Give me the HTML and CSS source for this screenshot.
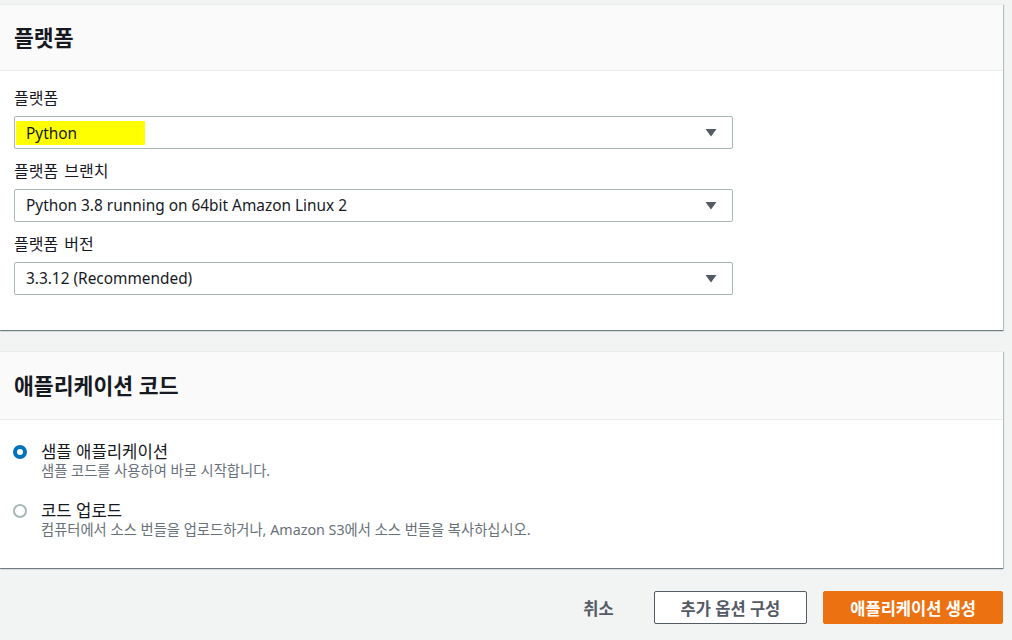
FILE: index.html
```html
<!DOCTYPE html>
<html lang="ko">
<head>
<meta charset="utf-8">
<link rel="stylesheet" href="styles.css">
</head>
<body>
<div class="page">
  <section class="card card-platform">
    <header class="card-header"><h2>플랫폼</h2></header>
    <div class="card-body">
      <div class="field">
        <div class="field-label">플랫폼</div>
        <div class="select">
          <span class="select-value"><span class="marker">Python</span></span>
          <svg class="caret" width="12" height="9" viewBox="0 0 12 9"><path d="M0.5 1h11L6 8.5z" fill="#545b64"/></svg>
        </div>
      </div>
      <div class="field">
        <div class="field-label">플랫폼 브랜치</div>
        <div class="select">
          <span class="select-value">Python 3.8 running on 64bit Amazon Linux 2</span>
          <svg class="caret" width="12" height="9" viewBox="0 0 12 9"><path d="M0.5 1h11L6 8.5z" fill="#545b64"/></svg>
        </div>
      </div>
      <div class="field">
        <div class="field-label">플랫폼 버전</div>
        <div class="select">
          <span class="select-value">3.3.12 (Recommended)</span>
          <svg class="caret" width="12" height="9" viewBox="0 0 12 9"><path d="M0.5 1h11L6 8.5z" fill="#545b64"/></svg>
        </div>
      </div>
    </div>
  </section>

  <section class="card card-code">
    <header class="card-header"><h2>애플리케이션 코드</h2></header>
    <div class="card-body radios">
      <div class="radio-item">
        <span class="radio checked"></span>
        <div class="radio-text">
          <div class="radio-label">샘플 애플리케이션</div>
          <div class="radio-desc">샘플 코드를 사용하여 바로 시작합니다.</div>
        </div>
      </div>
      <div class="radio-item">
        <span class="radio"></span>
        <div class="radio-text">
          <div class="radio-label">코드 업로드</div>
          <div class="radio-desc">컴퓨터에서 소스 번들을 업로드하거나, Amazon S3에서 소스 번들을 복사하십시오.</div>
        </div>
      </div>
    </div>
  </section>

  <div class="actions">
    <button class="btn btn-link">취소</button>
    <button class="btn btn-normal">추가 옵션 구성</button>
    <button class="btn btn-primary">애플리케이션 생성</button>
  </div>
</div>
</body>
</html>
```

FILE: styles.css
```css
* { box-sizing: border-box; }
html, body { margin: 0; padding: 0; }
body {
  background: #f2f3f3;
  font-family: "Noto Sans", "Noto Sans CJK KR", sans-serif;
  color: #16191f;
  width: 1012px;
  height: 640px;
  overflow: hidden;
}
.page {
  padding-top: 4px;
  width: 1004px;
}
.card {
  background: #fff;
  border-top: 1px solid #eaeded;
  box-shadow: 0 1px 1px 0 rgba(0, 28, 36, 0.45), 1px 1px 1px 0 rgba(0, 28, 36, 0.18);
  width: 1003px;
}
.card-code { margin-top: 21px; }
.card-header {
  background: #fafafa;
  border-bottom: 1px solid #eaeded;
  padding: 20px 14px 20px;
}
.card-code .card-header { padding: 21px 14px 21px; }
.card-header h2 {
  margin: 0;
  font-size: 21.6px;
  line-height: 25px;
  font-weight: 700;
  color: #16191f;
}
.card-body {
  padding: 17px 14px 35px;
}
.field + .field { margin-top: 12px; }
.field-label {
  font-size: 16px;
  line-height: 20px;
  margin-bottom: 8px;
  color: #16191f;
  word-spacing: 2px;
}
.select {
  width: 719px;
  height: 33px;
  border: 1px solid #aab7b8;
  border-radius: 2px;
  display: flex;
  align-items: center;
  justify-content: space-between;
  padding: 0 15px 0 11px;
}
.select-value {
  font-size: 15.4px;
  line-height: 20px;
  color: #16191f;
}
.marker {
  display: inline-block;
  background: #ffff00;
  margin-left: -10px;
  padding: 2px 68px 1px 10px;
  line-height: 21px;
}
.caret { display: block; }

.radios { padding: 22px 14px 29px; }
.radio-item {
  display: flex;
  align-items: flex-start;
}
.radio-item + .radio-item { margin-top: 21px; }
.radio {
  width: 14px;
  height: 14px;
  border-radius: 50%;
  border: 2px solid #aab7b8;
  margin: 3px 14px 0 -1px;
  flex: none;
  background: #fff;
}
.radio.checked {
  border: 4px solid #0073bb;
}
.radio-label {
  font-size: 16.7px;
  line-height: 20px;
  color: #16191f;
}
.radio-desc {
  font-size: 14.3px;
  line-height: 18px;
  color: #687078;
}

.actions {
  display: flex;
  justify-content: flex-end;
  align-items: center;
  gap: 16px;
  margin-top: 23px;
  width: 1003px;
}
.btn {
  font-family: inherit;
  font-size: 16.5px;
  font-weight: 700;
  height: 33px;
  border-radius: 2px;
  padding: 0 26px;
  cursor: pointer;
}
.btn-link {
  background: transparent;
  border: 1px solid transparent;
  color: #545b64;
  padding: 0 23px;
}
.btn-normal {
  background: #fff;
  border: 1px solid #545b64;
  color: #545b64;
}
.btn-primary {
  background: #ec7211;
  border: 1px solid #ec7211;
  color: #fff;
}
```
